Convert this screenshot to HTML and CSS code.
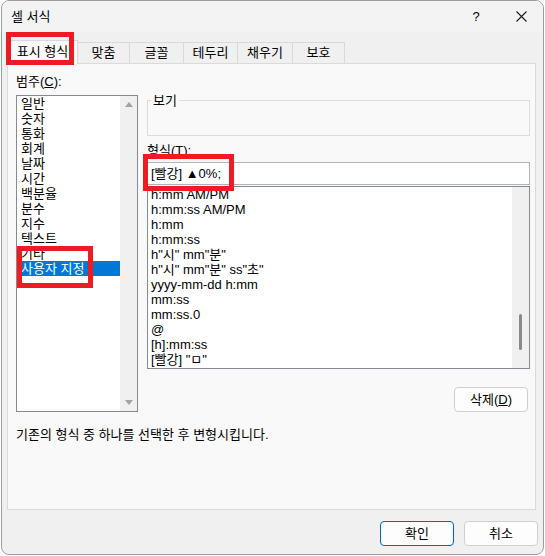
FILE: index.html
```html
<!DOCTYPE html>
<html lang="ko">
<head>
  <meta charset="UTF-8">
  <title>셀 서식</title>
  <link rel="stylesheet" href="styles.css">
</head>
<body>

<div class="dialog">
  <div class="titlebar">
    <span class="title">셀 서식</span>
    <div class="caption">
      <span class="cap-btn help">?</span>
      <span class="cap-btn close">
        <svg width="11" height="11" viewBox="0 0 11 11"><path d="M0.5 0.5L10.5 10.5M10.5 0.5L0.5 10.5" stroke="#1b1b1b" stroke-width="1.1" fill="none"/></svg>
      </span>
    </div>
  </div>

  <div class="tabs">
    <div class="tab active">표시 형식</div>
    <div class="tab t52">맞춤</div>
    <div class="tab t54">글꼴</div>
    <div class="tab t54">테두리</div>
    <div class="tab t55">채우기</div>
    <div class="tab t52">보호</div>
  </div>

  <div class="panel">
    <div class="columns">
      <div class="left">
        <div class="label">범주(<u>C</u>):</div>
        <div class="cat-list">
          <ul class="items">
            <li>일반</li>
            <li>숫자</li>
            <li>통화</li>
            <li>회계</li>
            <li>날짜</li>
            <li>시간</li>
            <li>백분율</li>
            <li>분수</li>
            <li>지수</li>
            <li>텍스트</li>
            <li>기타</li>
            <li class="selected">사용자 지정</li>
          </ul>
          <div class="vscroll">
            <span class="arrow up"></span>
            <span class="arrow down"></span>
          </div>
        </div>
      </div>

      <div class="right">
        <fieldset class="preview">
          <legend>보기</legend>
        </fieldset>
        <div class="label fmt-label">형식(<u>T</u>):</div>
        <div class="fmt-input">[빨강] ▲0%;</div>
        <div class="fmt-list">
          <ul class="items">
            <li>h:mm AM/PM</li>
            <li>h:mm:ss AM/PM</li>
            <li>h:mm</li>
            <li>h:mm:ss</li>
            <li>h"시" mm"분"</li>
            <li>h"시" mm"분" ss"초"</li>
            <li>yyyy-mm-dd h:mm</li>
            <li>mm:ss</li>
            <li>mm:ss.0</li>
            <li>@</li>
            <li>[h]:mm:ss</li>
            <li>[빨강] "ㅁ"</li>
          </ul>
          <div class="thin-scroll"><span class="thumb"></span></div>
        </div>
        <div class="del-row">
          <button class="btn">삭제(<u>D</u>)</button>
        </div>
      </div>
    </div>
    <p class="desc">기존의 형식 중 하나를 선택한 후 변형시킵니다.</p>
  </div>

  <div class="actions">
    <button class="btn primary">확인</button>
    <button class="btn">취소</button>
  </div>

  <span class="mark mark-tab"></span>
  <span class="mark mark-cat"></span>
  <span class="mark mark-fmt"></span>
</div>

</body>
</html>
```

FILE: styles.css
```css
* {
  margin: 0;
  padding: 0;
  box-sizing: border-box;
}
body {
  font-family: "Liberation Sans", "Noto Sans CJK KR", sans-serif;
  font-size: 13px;
  line-height: 15px;
  color: #000;
  background: #fff;
}

.dialog {
  position: relative;
  width: 543px;
  height: 555px;
  margin-left: 1px;
  border: 1px solid #9c9c9c;
  border-radius: 8px;
  background: #f0f0f0;
  overflow: hidden;
}

/* title bar */
.titlebar {
  height: 31px;
  display: flex;
  align-items: center;
  background: #f3f3f3;
  padding-left: 9px;
}
.caption {
  margin-left: auto;
  display: flex;
  height: 100%;
}
.cap-btn {
  display: flex;
  align-items: center;
  justify-content: center;
  height: 100%;
}
.help {
  width: 46px;
}
.close {
  width: 44px;
}

/* tabs */
.tabs {
  height: 31px;
  display: flex;
  align-items: flex-end;
  padding-left: 5px;
}
.tab {
  height: 21px;
  line-height: 20px;
  text-align: center;
  border: 1px solid #d9d9d9;
  border-left: none;
  border-bottom: none;
}
.tab.active {
  width: 71px;
  height: 24px;
  margin-bottom: -1px;
  line-height: 22px;
  border-left: 1px solid #d9d9d9;
  background: #f9f9f9;
  position: relative;
  z-index: 1;
}
.t52 { width: 52px; }
.t54 { width: 54px; }
.t55 { width: 55px; }

/* main panel */
.panel {
  height: 447px;
  margin: 0 7px 0 5px;
  border: 1px solid #dadada;
  background: #f9f9f9;
  padding: 10px 0 0 8px;
}
.columns {
  display: flex;
  gap: 9px;
}
.left {
  width: 122px;
}
.label {
  height: 15px;
}
.cat-list {
  margin-top: 6px;
  height: 317px;
  display: flex;
  border: 1px solid #868a91;
  background: #fff;
}
.items {
  flex: 1;
  list-style: none;
}
.cat-list .items li {
  padding-left: 4px;
  height: 15px;
  white-space: nowrap;
}
.cat-list .items li.selected {
  background: #0078d7;
  color: #fff;
}
.vscroll {
  width: 17px;
  background: #f0f0f0;
  display: flex;
  flex-direction: column;
  justify-content: space-between;
  align-items: center;
  padding: 6px 0;
}
.arrow {
  width: 0;
  height: 0;
  border-left: 4px solid transparent;
  border-right: 4px solid transparent;
}
.arrow.up {
  border-bottom: 5px solid #a3a3a3;
}
.arrow.down {
  border-top: 5px solid #a3a3a3;
}

.right {
  width: 383px;
  padding-top: 19px;
}
.preview {
  height: 43px;
  border: 1px solid #dcdcdc;
  min-width: 0;
}
.preview legend {
  margin-left: 3px;
  padding: 0 2px;
  line-height: 15px;
}
.fmt-label {
  margin-top: 7px;
}
.fmt-input {
  margin-top: 4px;
  height: 23px;
  line-height: 21px;
  padding: 0 3px;
  background: #fff;
  border: 1px solid #b0b3b8;
}
.fmt-list {
  margin-top: 1px;
  height: 183px;
  display: flex;
  border: 1px solid #868a91;
  background: #fff;
}
.fmt-list .items {
  padding-left: 3px;
}
.fmt-list .items li {
  height: 15px;
  white-space: nowrap;
}
.thin-scroll {
  width: 17px;
  background: #f0f0f0;
}
.thumb {
  display: block;
  width: 3px;
  height: 36px;
  margin: 127px 0 0 7px;
  background: #8a8a8a;
  border-radius: 2px;
}
.del-row {
  display: flex;
  justify-content: flex-end;
  margin-top: 18px;
  padding-right: 2px;
}

.btn {
  width: 74px;
  height: 25px;
  font: inherit;
  color: #000;
  background: #fdfdfd;
  border: 1px solid #d0d0d0;
  border-radius: 4px;
}
.btn.primary {
  border-color: #0067c0;
}

.desc {
  margin-top: 15px;
}

.actions {
  display: flex;
  justify-content: flex-end;
  gap: 10px;
  margin-top: 11px;
  padding-right: 5px;
}

/* red annotation boxes drawn over the dialog */
.mark {
  position: absolute;
  border: 5px solid #ed1c24;
  z-index: 5;
}
.mark-tab {
  left: 4px;
  top: 31px;
  width: 68px;
  height: 33px;
}
.mark-cat {
  left: 15px;
  top: 245px;
  width: 76px;
  height: 42px;
}
.mark-fmt {
  left: 141px;
  top: 153px;
  width: 91px;
  height: 37px;
}
```
